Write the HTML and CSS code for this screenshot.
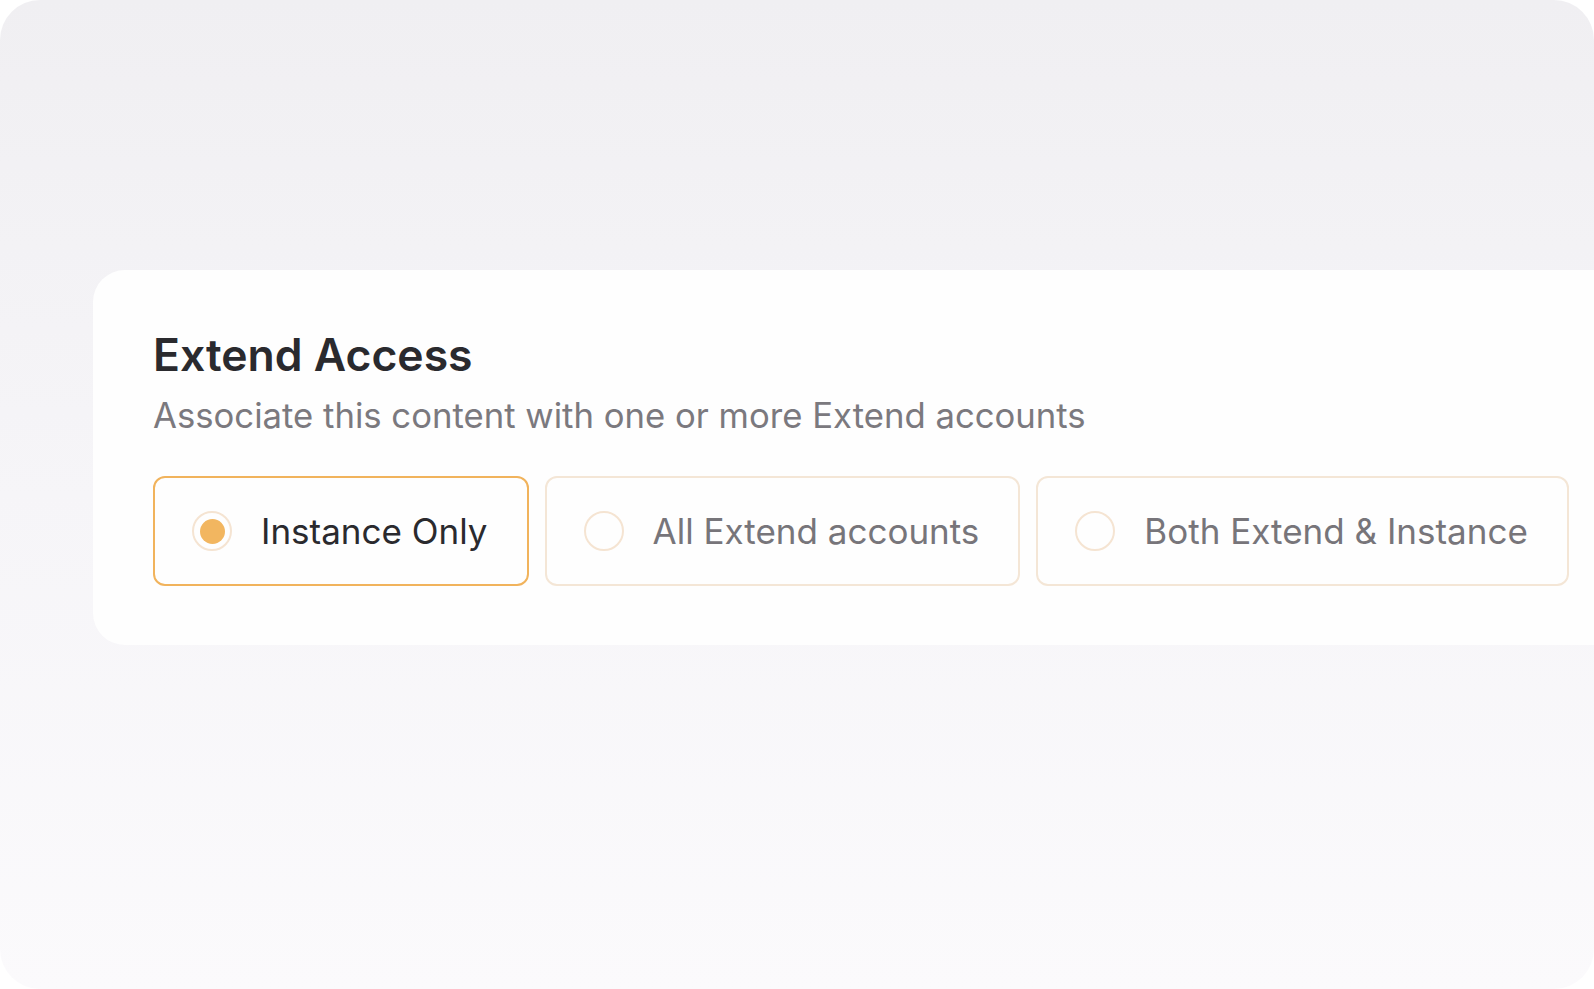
FILE: index.html
```html
<!DOCTYPE html>
<html lang="en">
<head>
  <meta charset="UTF-8" />
  <meta name="viewport" content="width=device-width, initial-scale=1.0" />
  <title>Extend Access</title>
  <link rel="stylesheet" href="styles.css">
</head>
<body>
  <div class="frame">
    <div class="card">
      <h1>Extend Access</h1>
      <p class="subtitle">Associate this content with one or more Extend accounts</p>
      <div class="options">
        <label class="option selected">
          <span class="radio"><span class="dot"></span></span>
          Instance Only
        </label>
        <label class="option">
          <span class="radio"></span>
          All Extend accounts
        </label>
        <label class="option">
          <span class="radio"></span>
          Both Extend &amp; Instance
        </label>
      </div>
    </div>
  </div>
</body>
</html>
```

FILE: styles.css
```css
body {
  margin: 0;
  background: #fff;
  font-family: Inter, 'Noto Sans', sans-serif;
  overflow: hidden;
}
.frame {
  width: 1594px;
  height: 989px;
  box-sizing: border-box;
  border-radius: 40px;
  background: linear-gradient(180deg, #f0eff2 0%, #f6f5f8 50%, #fbfafc 100%);
  padding: 270px 0 0 93px;
  overflow: hidden;
}
.card {
  width: 1600px;
  box-sizing: border-box;
  height: 375px;
  background: #fefefe;
  border-radius: 32px;
  padding: 59px 0 0 60px;
}
h1 {
  margin: 0;
  font-size: 44.5px;
  line-height: 52px;
  font-weight: 600;
  color: #2a2a2e;
}
.subtitle {
  margin: 13px 0 0;
  font-size: 34.7px;
  line-height: 42px;
  color: #7b797e;
}
.options {
  display: flex;
  gap: 16px;
  margin-top: 40px;
}
.option {
  display: flex;
  align-items: center;
  gap: 29px;
  height: 110px;
  box-sizing: border-box;
  padding: 0 39px 0 37px;
  border: 2px solid #f4e6d6;
  border-radius: 12px;
  font-size: 35px;
  color: #77757a;
}
.option.selected {
  border-color: #f1b35c;
  color: #2a2a2e;
}
.radio {
  width: 40px;
  height: 40px;
  box-sizing: border-box;
  border: 2px solid #f5e4d2;
  border-radius: 50%;
  display: flex;
  align-items: center;
  justify-content: center;
  flex-shrink: 0;
}
.dot {
  width: 25px;
  height: 25px;
  border-radius: 50%;
  background: #f2b660;
}
```
